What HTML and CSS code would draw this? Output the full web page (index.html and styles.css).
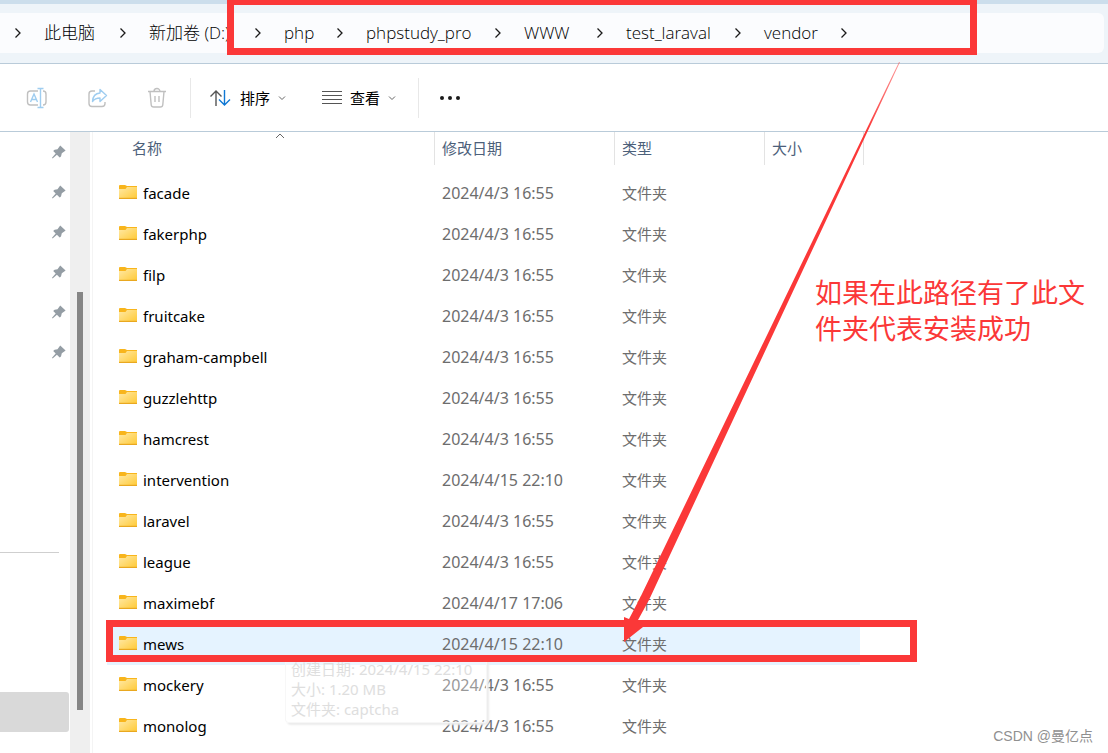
FILE: index.html
```
<!DOCTYPE html>
<html lang="zh-CN">
<head>
<meta charset="utf-8">
<title>vendor</title>
<link rel="stylesheet" href="styles.css">
</head>
<body>
<svg class="defs" aria-hidden="true">
  <defs>
    <linearGradient id="folder-face" x1="0" y1="0" x2="1" y2="1">
      <stop offset="0" stop-color="#ffe9a6"/>
      <stop offset="1" stop-color="#ffc934"/>
    </linearGradient>
    <linearGradient id="arrow-fade" gradientUnits="userSpaceOnUse" x1="0" y1="62" x2="0" y2="130">
      <stop offset="0" stop-color="#fb3838" stop-opacity="0.5"/>
      <stop offset="1" stop-color="#fb3838"/>
    </linearGradient>
    <symbol id="folder" viewBox="0 0 18 14">
      <path d="M0 1a1 1 0 0 1 1-1h5l2 1h10v4H0z" fill="#f8b51c"/>
      <path d="M0 4h6.500l1.500-2h10v11a1 1 0 0 1-1 1H1a1 1 0 0 1-1-1z" fill="url(#folder-face)"/>
      <path d="M0 13.400h18" stroke="#e9a820" stroke-width="1.200"/>
    </symbol>
    <symbol id="pin" viewBox="0 0 14 14">
      <path d="M8.200.400 13.600 5.400 12.300 6.400 9.800 8.200 9 11.500 7.700 12.500 4.900 9.800.600 13.400 0 12.800 3.700 8.600 1.200 6 2.600 4.700 5.500 4.300 7.300 1.700z" fill="#949da4"/>
    </symbol>
    <symbol id="chev-right" viewBox="0 0 8 12">
      <path d="M1.500 1.500 6 6l-4.500 4.500" fill="none" stroke="#1a1a1a" stroke-width="1.300"/>
    </symbol>
    <symbol id="chev-down" viewBox="0 0 8 8">
      <path d="M1 2.500l3 3 3-3" fill="none" stroke="#666" stroke-width="1"/>
    </symbol>
  </defs>
</svg>

<main class="explorer">
  <header class="address">
    <nav class="crumbs" aria-label="路径">
      <svg class="sep"><use href="#chev-right"/></svg>
      <a class="c1" href="#">此电脑</a>
      <svg class="sep"><use href="#chev-right"/></svg>
      <a class="c2" href="#">新加卷 (D:)</a>
      <svg class="sep"><use href="#chev-right"/></svg>
      <a class="c3" href="#">php</a>
      <svg class="sep"><use href="#chev-right"/></svg>
      <a class="c4" href="#">phpstudy_pro</a>
      <svg class="sep"><use href="#chev-right"/></svg>
      <a class="c5" href="#">WWW</a>
      <svg class="sep"><use href="#chev-right"/></svg>
      <a class="c6" href="#">test_laraval</a>
      <svg class="sep"><use href="#chev-right"/></svg>
      <a class="c7" href="#">vendor</a>
      <svg class="sep"><use href="#chev-right"/></svg>
    </nav>
  </header>

  <div class="toolbar">
    <div class="group edit">
      <button aria-label="重命名" disabled>
        <svg width="22" height="22" viewBox="0 0 22 22" fill="none" stroke-width="1.400">
          <path d="M12 4H4.500A3 3 0 0 0 1.500 7v8a3 3 0 0 0 3 3H12M17 4a3 3 0 0 1 3 3v8a3 3 0 0 1-3 3" stroke="#c0c0c0"/>
          <path d="M14.500 1.500v19M11.500 1.500h6M11.500 20.500h6M4.500 15 8 7l3.500 8M5.700 12.500h4.600" stroke="#9fcdf0"/>
        </svg>
      </button>
      <button aria-label="共享" disabled>
        <svg width="22" height="22" viewBox="0 0 22 22" fill="none" stroke-width="1.400" stroke-linejoin="round">
          <path d="M9 4H6a3 3 0 0 0-3 3v9.500a3 3 0 0 0 3 3h10a3 3 0 0 0 3-3V15" stroke="#c0c0c0"/>
          <path d="M14 2.500 20.500 8.500 14 14.500V11Q9 11 6.500 14.500 7 6.500 14 6z" stroke="#9fcdf0"/>
        </svg>
      </button>
      <button aria-label="删除" disabled>
        <svg width="22" height="22" viewBox="0 0 22 22" fill="none" stroke="#c0c0c0" stroke-width="1.400">
          <path d="M2 4.500h18M8 4.500a3 3 0 0 1 6 0M4 4.500l1.200 13.200A2.500 2.500 0 0 0 7.700 20h6.600a2.500 2.500 0 0 0 2.500-2.300L18 4.500M9 9v6M13 9v6"/>
        </svg>
      </button>
    </div>
    <div class="group arrange">
      <button class="menu-button">
        <svg width="22" height="18" viewBox="0 0 22 18" fill="none" stroke-width="1.400">
          <path d="M6 17V2M.500 7.500 6 2l5.500 5.500" stroke="#555"/>
          <path d="M14.500 1v15M9 10.500l5.500 5.500 5.500-5.500" stroke="#0f78d4"/>
        </svg>
        <span>排序</span>
        <svg class="down"><use href="#chev-down"/></svg>
      </button>
      <button class="menu-button">
        <svg width="20" height="14" viewBox="0 0 20 14" stroke="#555" stroke-width="1">
          <path d="M0 .500h20M0 4.500h20M0 8.500h20M0 12.500h20"/>
        </svg>
        <span>查看</span>
        <svg class="down"><use href="#chev-down"/></svg>
      </button>
    </div>
    <button class="more" aria-label="更多">
      <svg width="22" height="6" viewBox="0 0 22 6" fill="#1a1a1a">
        <circle cx="3" cy="3" r="2"/><circle cx="11" cy="3" r="2"/><circle cx="19" cy="3" r="2"/>
      </svg>
    </button>
  </div>

  <div class="body">
    <aside class="sidebar">
      <ul class="pins">
        <li><svg><use href="#pin"/></svg></li>
        <li><svg><use href="#pin"/></svg></li>
        <li><svg><use href="#pin"/></svg></li>
        <li><svg><use href="#pin"/></svg></li>
        <li><svg><use href="#pin"/></svg></li>
        <li><svg><use href="#pin"/></svg></li>
      </ul>
      <div class="rule"></div>
      <div class="current"></div>
    </aside>
    <div class="scrollbar"><div class="thumb"></div></div>
    <section class="files">
      <table>
        <colgroup><col class="w-name"><col class="w-date"><col class="w-type"><col class="w-size"></colgroup>
        <thead>
          <tr>
            <th>名称<svg class="sort" viewBox="0 0 10 6"><path d="M1 5l4-4 4 4" fill="none" stroke="#666"/></svg></th>
            <th>修改日期</th><th>类型</th><th>大小</th>
          </tr>
        </thead>
        <tbody>
          <tr><td><svg class="folder"><use href="#folder"/></svg>facade</td><td class="date">2024/4/3 16:55</td><td>文件夹</td><td></td></tr>
          <tr><td><svg class="folder"><use href="#folder"/></svg>fakerphp</td><td class="date">2024/4/3 16:55</td><td>文件夹</td><td></td></tr>
          <tr><td><svg class="folder"><use href="#folder"/></svg>filp</td><td class="date">2024/4/3 16:55</td><td>文件夹</td><td></td></tr>
          <tr><td><svg class="folder"><use href="#folder"/></svg>fruitcake</td><td class="date">2024/4/3 16:55</td><td>文件夹</td><td></td></tr>
          <tr><td><svg class="folder"><use href="#folder"/></svg>graham-campbell</td><td class="date">2024/4/3 16:55</td><td>文件夹</td><td></td></tr>
          <tr><td><svg class="folder"><use href="#folder"/></svg>guzzlehttp</td><td class="date">2024/4/3 16:55</td><td>文件夹</td><td></td></tr>
          <tr><td><svg class="folder"><use href="#folder"/></svg>hamcrest</td><td class="date">2024/4/3 16:55</td><td>文件夹</td><td></td></tr>
          <tr><td><svg class="folder"><use href="#folder"/></svg>intervention</td><td class="date">2024/4/15 22:10</td><td>文件夹</td><td></td></tr>
          <tr><td><svg class="folder"><use href="#folder"/></svg>laravel</td><td class="date">2024/4/3 16:55</td><td>文件夹</td><td></td></tr>
          <tr><td><svg class="folder"><use href="#folder"/></svg>league</td><td class="date">2024/4/3 16:55</td><td>文件夹</td><td></td></tr>
          <tr><td><svg class="folder"><use href="#folder"/></svg>maximebf</td><td class="date">2024/4/17 17:06</td><td>文件夹</td><td></td></tr>
          <tr class="hover"><td><svg class="folder"><use href="#folder"/></svg>mews</td><td class="date">2024/4/15 22:10</td><td>文件夹</td><td></td></tr>
          <tr><td><svg class="folder"><use href="#folder"/></svg>mockery</td><td class="date">2024/4/3 16:55</td><td>文件夹</td><td></td></tr>
          <tr><td><svg class="folder"><use href="#folder"/></svg>monolog</td><td class="date">2024/4/3 16:55</td><td>文件夹</td><td></td></tr>
        </tbody>
      </table>
    </section>
  </div>

  <div class="tooltip" role="tooltip">创建日期: 2024/4/15 22:10<br>大小: 1.20 MB<br>文件夹: captcha</div>
  <div class="mark mark-path"></div>
  <div class="mark mark-row"></div>
  <svg class="arrow" width="1108" height="753" viewBox="0 0 1108 753" aria-hidden="true">
    <path d="M900 62H899L639 600 629 619 624 617V642L643 627 638 620 649 600z" fill="url(#arrow-fade)"/>
  </svg>
  <p class="note">如果在此路径有了此文件夹代表安装成功</p>
  <p class="watermark">CSDN @曼亿点</p>
</main>
</body>
</html>
```
FILE: styles.css
```
* { box-sizing: border-box; }
body {
  margin: 0;
  background: #fff;
  color: #000;
  font: 15px/20px "Noto Sans", "Noto Sans CJK SC", sans-serif;
}
.defs { position: absolute; width: 0; height: 0; }
button { border: 0; padding: 0; background: none; font: inherit; color: inherit; }
svg { display: block; flex: none; }
.explorer {
  position: relative;
  display: flex;
  flex-direction: column;
  height: 100vh;
  overflow: hidden;
}

.address {
  height: 64px;
  padding: 9px 4px 10px 0;
  background: #eef4f9;
  border-top: 4px solid #ccdeec;
  border-bottom: 1px solid #b9cbd9;
}
.crumbs {
  display: flex;
  align-items: center;
  height: 40px;
  padding-left: 14px;
  background: #fbfcfe;
  border-radius: 0 6px 6px 0;
  font-family: "Open Sans", "Noto Sans CJK SC", sans-serif;
  font-size: 17px;
  font-weight: 300;
  line-height: 24px;
}
.crumbs a { flex: none; color: #000; text-decoration: none; white-space: nowrap; margin: 0 22px; }
.sep { width: 8px; height: 12px; }
.crumbs .c1 { width: 53px; }
.crumbs .c2 { width: 83px; }
.crumbs .c3 { width: 30px; }
.crumbs .c4 { width: 106px; }
.crumbs .c5 { width: 50px; }
.crumbs .c6 { width: 86px; }
.crumbs .c7 { width: 54px; }

.toolbar {
  display: flex;
  align-items: center;
  height: 68px;
  border-bottom: 1px solid #b9cbd9;
}
.group { display: flex; align-items: center; height: 40px; border-right: 1px solid #e8e8e8; }
.edit { width: 191px; padding-left: 26px; gap: 38px; }
.arrange { width: 228px; padding-left: 19px; gap: 36px; }
.menu-button { display: flex; align-items: center; gap: 8px; }
.down { width: 8px; height: 8px; }
.more { margin-left: 20px; }

.body { display: flex; flex: 1; min-height: 0; }
.sidebar { width: 70px; padding-top: 13px; }
.pins { margin: 0; padding: 0; list-style: none; }
.pins li { height: 40px; padding-left: 52px; }
.pins svg { width: 14px; height: 14px; }
.rule { width: 59px; height: 1px; margin-top: 167px; background: #cfcfcf; }
.current { width: 69px; height: 40px; margin-top: 139px; background: #d9d9d9; border-radius: 0 3px 3px 0; }
.scrollbar { width: 20px; padding: 160px 7px 0; background: #efefef; }
.thumb { height: 418px; background: #868686; }

.files { flex: 1; margin-left: 2px; border-left: 1px solid #f4f4f4; padding-left: 14px; }
table { width: 757px; border-collapse: separate; border-spacing: 0; table-layout: fixed; }
.w-name { width: 328px; }
.w-date { width: 180px; }
.w-type { width: 150px; }
.w-size { width: 99px; }
th {
  position: relative;
  height: 33px;
  padding: 0 0 2px 7px;
  border-right: 1px solid #e3e3e3;
  color: #4c607a;
  font-weight: 400;
  text-align: left;
}
th:first-child { padding-left: 25px; }
.sort { position: absolute; left: 168px; top: 1px; width: 10px; height: 6px; }
td { height: 41px; padding: 0 0 2px 7px; color: #6d6d6d; }
td:first-child { display: flex; align-items: center; gap: 6px; padding-left: 12px; color: #000; }
.date { font-size: 16px; }
tbody::before { content: ""; display: block; height: 8px; }
.folder { width: 18px; height: 14px; margin-bottom: 2px; }
.hover { background: linear-gradient(#e5f3ff, #e5f3ff) no-repeat left / 753px 100%; }

.tooltip {
  position: absolute;
  left: 285px;
  top: 656px;
  width: 202px;
  padding: 3px 5px;
  background: rgba(255, 255, 255, 0.3);
  border: 1px solid #f7f7f7;
  border-top: 0;
  border-radius: 4px;
  box-shadow: 2px 2px 2px #ececec;
  color: #dedede;
}
.mark { position: absolute; border: 7px solid #fb3838; }
.mark-path { left: 227px; top: -2px; width: 750px; height: 57px; }
.mark-row { left: 106px; top: 620px; width: 811px; height: 42px; }
.arrow { position: absolute; left: 0; top: 0; }
.note {
  position: absolute;
  left: 815px;
  top: 275px;
  width: 275px;
  margin: 0;
  color: #fb3838;
  font-size: 27px;
  line-height: 36px;
}
.watermark { position: absolute; right: 15px; bottom: 7px; margin: 0; color: #909090; font-family: "Liberation Sans", "Noto Sans CJK SC", sans-serif; font-size: 14px; }
```
